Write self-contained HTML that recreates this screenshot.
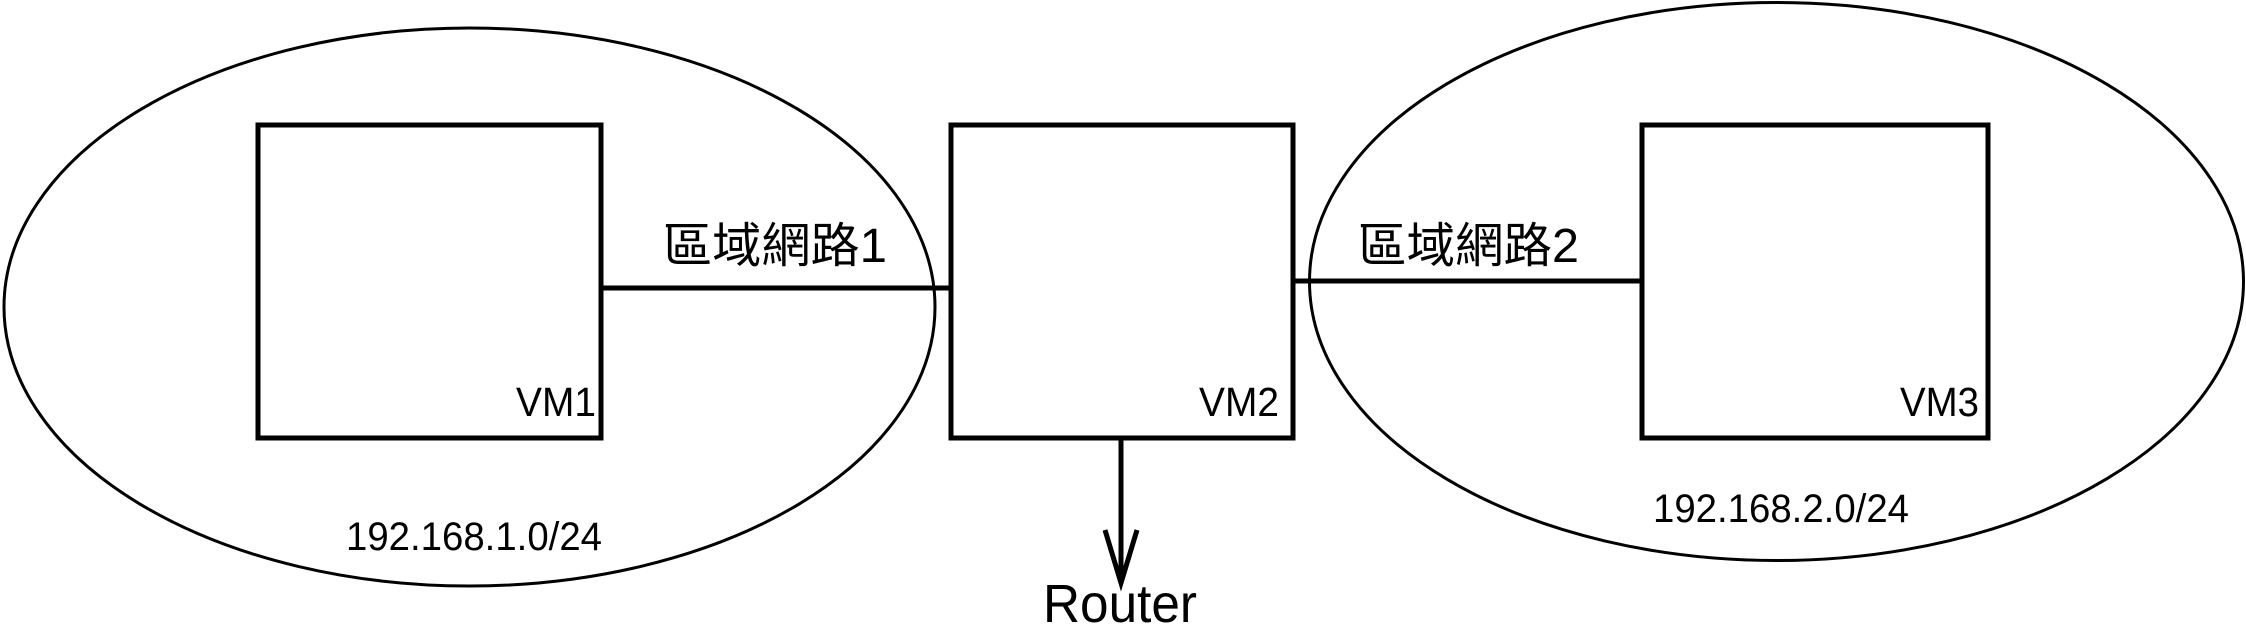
<!DOCTYPE html>
<html><head><meta charset="utf-8"><style>
html,body{margin:0;padding:0;background:#fff;}
svg{display:block;}
text{font-family:"Liberation Sans","Noto Sans CJK TC",sans-serif;fill:#000;}
</style></head><body>
<svg width="2246" height="625" viewBox="0 0 2246 625" xmlns="http://www.w3.org/2000/svg">
<g fill="none" stroke="#000">
<ellipse cx="469.5" cy="307" rx="465.5" ry="279" stroke-width="3"/>
<ellipse cx="1776.5" cy="281.5" rx="467" ry="279" stroke-width="3"/>
<rect x="258" y="125" width="343" height="313" stroke-width="5"/>
<rect x="951" y="125" width="342" height="313" stroke-width="5"/>
<rect x="1642" y="125" width="346" height="313" stroke-width="5"/>
<line x1="601" y1="288" x2="951" y2="288" stroke-width="5"/>
<line x1="1293" y1="281" x2="1642" y2="281" stroke-width="5"/>
<line x1="1121" y1="438" x2="1121" y2="582" stroke-width="5"/>
<polyline points="1105,530 1121,583 1137,530" stroke-width="5"/>
</g>
<text x="663" y="262" font-size="48" textLength="224" lengthAdjust="spacingAndGlyphs">區域網路1</text>
<text x="1358" y="262" font-size="48" textLength="221" lengthAdjust="spacingAndGlyphs">區域網路2</text>
<text x="516" y="416" font-size="41" textLength="80" lengthAdjust="spacingAndGlyphs">VM1</text>
<text x="1199" y="416" font-size="41" textLength="80" lengthAdjust="spacingAndGlyphs">VM2</text>
<text x="1900" y="416" font-size="41" textLength="79" lengthAdjust="spacingAndGlyphs">VM3</text>
<text x="346" y="550" font-size="40" textLength="256" lengthAdjust="spacingAndGlyphs">192.168.1.0/24</text>
<text x="1653" y="522" font-size="40" textLength="256" lengthAdjust="spacingAndGlyphs">192.168.2.0/24</text>
<text x="1043" y="622" font-size="54" textLength="154" lengthAdjust="spacingAndGlyphs">Router</text>
</svg>
</body></html>
